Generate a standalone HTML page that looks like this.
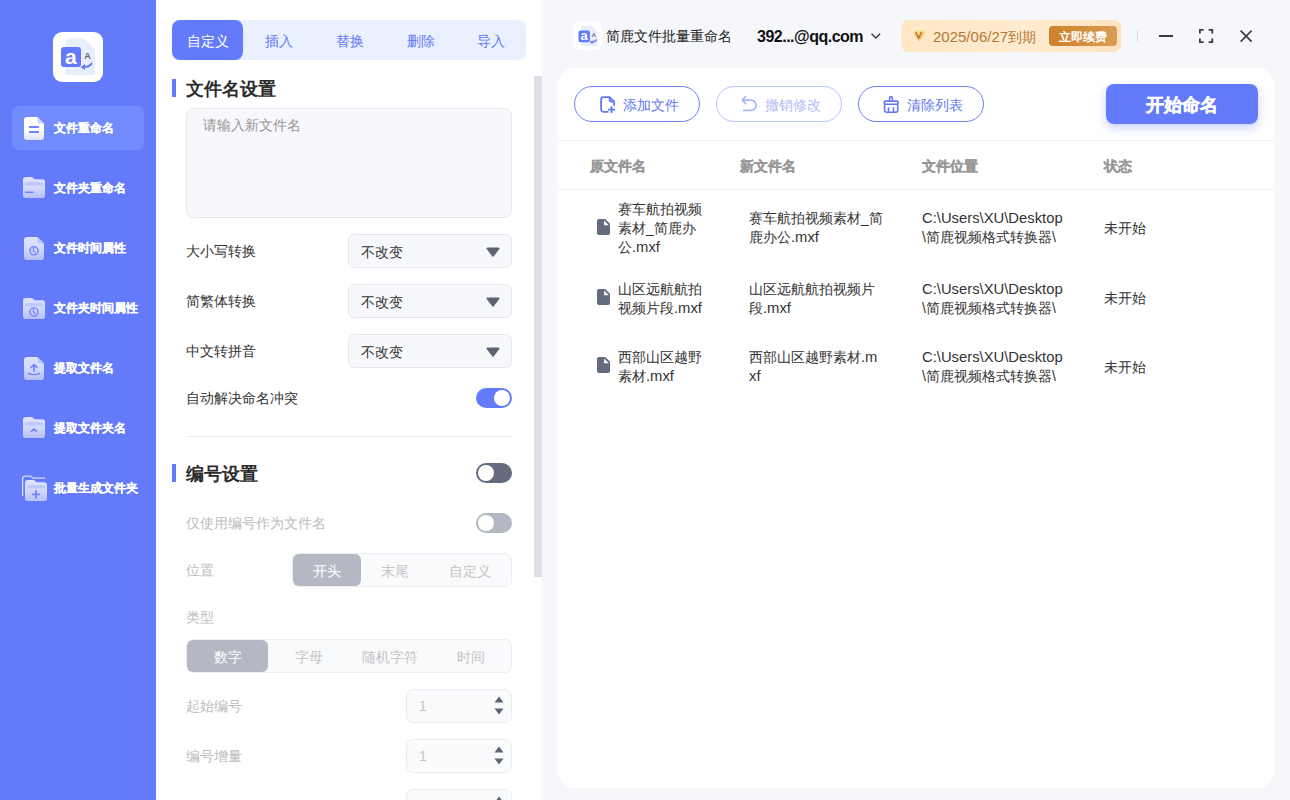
<!DOCTYPE html>
<html><head><meta charset="utf-8">
<style>
*{box-sizing:border-box;margin:0;padding:0}
html,body{width:1290px;height:800px;overflow:hidden;font-family:"Liberation Sans",sans-serif;background:#F5F6FA}
.a{position:absolute;white-space:nowrap}
#side{position:absolute;left:0;top:0;width:156px;height:800px;background:#637BFA}
.logo{position:absolute;left:53px;top:32px;width:50px;height:50px;background:#fff;border-radius:9px}
.nav{position:absolute;left:12px;width:132px;height:44px;border-radius:7px}
.nav.act{background:#718BFA}
.nav .t{position:absolute;left:42px;top:0;line-height:45px;font-size:12px;font-weight:bold;color:#fff;white-space:nowrap;-webkit-text-stroke:0.2px #fff}
.nav svg{position:absolute;left:11px;top:10px}
#mid{position:absolute;left:156px;top:0;width:386px;height:800px;background:#fff;overflow:hidden}
.tabs{position:absolute;left:16px;top:20px;width:354px;height:40px;background:#EBF0FE;border-radius:8px}
.tab{position:absolute;top:0;height:40px;line-height:43px;font-size:14px;color:#5F79F6;text-align:center;width:71px}
.tab.act{background:#637BFA;color:#fff;border-radius:8px}
.bar{position:absolute;left:16px;width:4px;height:17px;background:#637BFA}
.sec{position:absolute;left:30px;font-size:18px;font-weight:bold;color:#2B2B2B;line-height:20px;white-space:nowrap}
.lbl{position:absolute;left:30px;font-size:14px;color:#333;line-height:20px;white-space:nowrap}
.lbl.dis{color:#BDBDBD}
.sel{position:absolute;left:192px;width:164px;height:34px;background:#F7F8FC;border:1px solid #E6E8EE;border-radius:6px}
.sel .v{position:absolute;left:12px;top:1px;line-height:32px;font-size:14px;color:#333}
.sel svg{position:absolute;left:137px;top:12px}
.tog{position:absolute;left:320px;width:36px;height:20px;border-radius:10px}
.tog i{position:absolute;top:2px;width:16px;height:16px;border-radius:8px;background:#fff}
.seg{position:absolute;height:34px;background:#F9FAFC;border:1px solid #EBEDF2;border-radius:7px}
.seg .s{position:absolute;top:0;height:32px;line-height:34px;font-size:14px;color:#C4C4C4;text-align:center}
.seg .s.on{background:#B3B8C3;color:#fff;border-radius:6px}
.spin{position:absolute;left:250px;width:106px;height:34px;background:#F9FAFC;border:1px solid #EBEDF2;border-radius:7px}
.spin .v{position:absolute;left:12px;top:0;line-height:32px;font-size:14px;color:#C4C4C4}
.spin svg{position:absolute;left:86px;top:5px}
.sb{position:absolute;left:378px;top:76px;width:8px;height:501px;background:#DFDFE8}
#right{position:absolute;left:542px;top:0;width:748px;height:800px;background:#F6F7FB}
.card{position:absolute;left:16px;top:68px;width:716px;height:720px;background:#fff;border-radius:16px}
.btn{position:absolute;top:18px;width:126px;height:36px;border:1px solid #6B7FF6;border-radius:18px;background:#fff}
.btn .t{position:absolute;left:48px;top:1px;line-height:34px;font-size:14px;color:#6378F3}
.btn svg{position:absolute;left:24px;top:9px}
.btn.dis{border-color:#B9C4FA}
.btn.dis .t{color:#B3BDF7}
.go{position:absolute;left:548px;top:16px;width:152px;height:40px;background:#637BFA;border-radius:8px;box-shadow:0 4px 10px rgba(99,123,250,0.35);color:#fff;font-size:18px;font-weight:bold;text-align:center;line-height:43px;-webkit-text-stroke:0.4px #fff}
.hl{position:absolute;left:0;width:716px;height:1px;background:#EEEFF3}
.th{position:absolute;top:90px;font-size:14px;font-weight:bold;color:#999;line-height:16px;-webkit-text-stroke:0.3px #999}
.td{position:absolute;font-size:14px;color:#333;line-height:19px;white-space:nowrap}
.l{font-size:14.8px}
.fi{position:absolute;left:39px}
</style></head><body>
<div id="side">
  <div class="logo">
    <svg width="50" height="50" viewBox="0 0 50 50" style="position:absolute;left:0;top:0">
      <path d="M15.5 6.5h15.5l11 11v22.5a3 3 0 0 1-3 3h-23.5a3 3 0 0 1-3-3v-30.5a3 3 0 0 1 3-3z" fill="#E8EEFD"/>
      <rect x="8" y="15" width="20" height="20" rx="3" fill="#637BFA"/>
      <text x="17.8" y="31.5" font-family="Liberation Sans" font-size="21" font-weight="bold" fill="#fff" text-anchor="middle">a</text>
      <text x="34.5" y="27" font-family="Liberation Sans" font-size="9" font-weight="bold" fill="#5D6272" text-anchor="middle">A</text>
      <path d="M38.5 31.5q-2 3.5-7.5 3.5" stroke="#637BFA" stroke-width="2" fill="none" stroke-linecap="round"/>
      <path d="M27.5 35l4.5-3v6z" fill="#637BFA"/>
    </svg>
  </div>
  <div class="nav act" style="top:106px"><div class="t">文件重命名</div></div>
  <div class="nav" style="top:166px"><div class="t">文件夹重命名</div></div>
  <div class="nav" style="top:226px"><div class="t">文件时间属性</div></div>
  <div class="nav" style="top:286px"><div class="t">文件夹时间属性</div></div>
  <div class="nav" style="top:346px"><div class="t">提取文件名</div></div>
  <div class="nav" style="top:406px"><div class="t">提取文件夹名</div></div>
  <div class="nav" style="top:466px"><div class="t">批量生成文件夹</div></div>
  <svg width="156" height="800" viewBox="0 0 156 800" style="position:absolute;left:0;top:0">
    <defs>
      <linearGradient id="gw" x1="0" y1="0" x2="0" y2="1"><stop offset="0" stop-color="#fff"/><stop offset="0.55" stop-color="#fff"/><stop offset="1" stop-color="#DADFFC"/></linearGradient>
      <linearGradient id="gl" x1="0" y1="0" x2="0" y2="1"><stop offset="0" stop-color="#DDE2FD"/><stop offset="0.5" stop-color="#D3D9FC"/><stop offset="1" stop-color="#B6C0FA"/></linearGradient>
    </defs>
    <path transform="translate(24,117)" d="M3 0h10.5l6.5 6.5v13.5a3 3 0 0 1-3 3h-14a3 3 0 0 1-3-3v-17a3 3 0 0 1 3-3z" fill="url(#gw)"/><path transform="translate(24,117)" d="M13.5 0l6.5 6.5h-4.5a2 2 0 0 1-2-2z" fill="#C9D1FC"/><rect x="29" y="126" width="10" height="2" fill="#6F86F9"/><rect x="29" y="131" width="10" height="2" fill="#6F86F9"/><g transform="translate(23,177)"><path d="M0 2.8a2.8 2.8 0 0 1 2.8-2.8h5.7a2 2 0 0 1 1.5.7l1.3 1.6h7.9a2.8 2.8 0 0 1 2.8 2.8v13.1a2.8 2.8 0 0 1-2.8 2.8h-16.4a2.8 2.8 0 0 1-2.8-2.8z" fill="url(#gl)"/><path d="M2 7.5a2.5 2.5 0 0 1 2.5-2.5h13a2.5 2.5 0 0 1 2.5 2.5v1h-18z" fill="#BAC4FA" opacity="0.8"/></g><rect x="25" y="191.5" width="8.8" height="1.6" rx="0.8" fill="#6F86F9"/><path transform="translate(24,237)" d="M3 0h10.5l6.5 6.5v13.5a3 3 0 0 1-3 3h-14a3 3 0 0 1-3-3v-17a3 3 0 0 1 3-3z" fill="url(#gl)"/><path transform="translate(24,237)" d="M13.5 0l6.5 6.5h-4.5a2 2 0 0 1-2-2z" fill="#BEC8FB"/><circle cx="34" cy="250.8" r="4.1" fill="none" stroke="#6F86F9" stroke-width="1.4"/><path d="M33.4 248.3v2.4l1.8 1.7" fill="none" stroke="#6F86F9" stroke-width="1.3" stroke-linecap="round"/><g transform="translate(23,298)"><path d="M0 2.8a2.8 2.8 0 0 1 2.8-2.8h5.7a2 2 0 0 1 1.5.7l1.3 1.6h7.9a2.8 2.8 0 0 1 2.8 2.8v13.1a2.8 2.8 0 0 1-2.8 2.8h-16.4a2.8 2.8 0 0 1-2.8-2.8z" fill="url(#gl)"/><path d="M2 7.5a2.5 2.5 0 0 1 2.5-2.5h13a2.5 2.5 0 0 1 2.5 2.5v1h-18z" fill="#BAC4FA" opacity="0.8"/></g><circle cx="34" cy="312" r="4.1" fill="none" stroke="#6F86F9" stroke-width="1.4"/><path d="M33.4 309.5v2.4l1.8 1.7" fill="none" stroke="#6F86F9" stroke-width="1.3" stroke-linecap="round"/><path transform="translate(24,357)" d="M3 0h10.5l6.5 6.5v13.5a3 3 0 0 1-3 3h-14a3 3 0 0 1-3-3v-17a3 3 0 0 1 3-3z" fill="url(#gl)"/><path transform="translate(24,357)" d="M13.5 0l6.5 6.5h-4.5a2 2 0 0 1-2-2z" fill="#BEC8FB"/><path d="M34 371v-6.3M31 367.5l3-3 3 3" fill="none" stroke="#6F86F9" stroke-width="1.6" stroke-linecap="round" stroke-linejoin="round"/><path d="M28.3 373.3q5.7 2.6 11.4 0" fill="none" stroke="#6F86F9" stroke-width="1.4" stroke-linecap="round"/><g transform="translate(23,417)"><path d="M0 2.8a2.8 2.8 0 0 1 2.8-2.8h5.7a2 2 0 0 1 1.5.7l1.3 1.6h7.9a2.8 2.8 0 0 1 2.8 2.8v13.1a2.8 2.8 0 0 1-2.8 2.8h-16.4a2.8 2.8 0 0 1-2.8-2.8z" fill="url(#gl)"/><path d="M2 7.5a2.5 2.5 0 0 1 2.5-2.5h13a2.5 2.5 0 0 1 2.5 2.5v1h-18z" fill="#BAC4FA" opacity="0.8"/></g><path d="M31.3 431.5l2.7-2.6 2.7 2.6" fill="none" stroke="#6F86F9" stroke-width="1.6" stroke-linecap="round" stroke-linejoin="round"/><path d="M22.6 495.5v-16.5a2.8 2.8 0 0 1 2.8-2.8h5.5l1.8 2h11.8" fill="none" stroke="#D2D9FC" stroke-width="1.3" stroke-linecap="round"/><g transform="translate(25,480)"><path d="M0 2.8a2.8 2.8 0 0 1 2.8-2.8h5.7a2 2 0 0 1 1.5.7l1.3 1.6h7.9a2.8 2.8 0 0 1 2.8 2.8v13.1a2.8 2.8 0 0 1-2.8 2.8h-16.4a2.8 2.8 0 0 1-2.8-2.8z" fill="url(#gl)"/><path d="M2 7.5a2.5 2.5 0 0 1 2.5-2.5h13a2.5 2.5 0 0 1 2.5 2.5v1h-18z" fill="#BAC4FA" opacity="0.8"/></g><path d="M36 491v6.8M32.6 494.4h6.8" stroke="#6F86F9" stroke-width="1.8" stroke-linecap="round"/>
  </svg>
</div>
<div id="mid">
  <div class="tabs">
    <div class="tab act" style="left:0">自定义</div>
    <div class="tab" style="left:71px">插入</div>
    <div class="tab" style="left:142px">替换</div>
    <div class="tab" style="left:213px">删除</div>
    <div class="tab" style="left:283px">导入</div>
  </div>
  <div class="bar" style="top:79px;height:18px"></div>
  <div class="sec" style="top:79px">文件名设置</div>
  <div class="a" style="left:30px;top:108px;width:326px;height:110px;background:#F7F8FC;border:1px solid #E6E8EE;border-radius:8px"></div>
  <div class="a" style="left:47px;top:115px;font-size:14px;line-height:20px;color:#969696">请输入新文件名</div>

  <div class="lbl" style="top:241px">大小写转换</div>
  <div class="sel" style="top:234px"><div class="v">不改变</div><svg width="14" height="10" viewBox="0 0 14 10"><path d="M1.5 0.5h11a1 1 0 0 1 .8 1.6l-5.5 7.2a1 1 0 0 1-1.6 0l-5.5-7.2a1 1 0 0 1 .8-1.6z" fill="#5F6475"/></svg></div>
  <div class="lbl" style="top:291px">简繁体转换</div>
  <div class="sel" style="top:284px"><div class="v">不改变</div><svg width="14" height="10" viewBox="0 0 14 10"><path d="M1.5 0.5h11a1 1 0 0 1 .8 1.6l-5.5 7.2a1 1 0 0 1-1.6 0l-5.5-7.2a1 1 0 0 1 .8-1.6z" fill="#5F6475"/></svg></div>
  <div class="lbl" style="top:341px">中文转拼音</div>
  <div class="sel" style="top:334px"><div class="v">不改变</div><svg width="14" height="10" viewBox="0 0 14 10"><path d="M1.5 0.5h11a1 1 0 0 1 .8 1.6l-5.5 7.2a1 1 0 0 1-1.6 0l-5.5-7.2a1 1 0 0 1 .8-1.6z" fill="#5F6475"/></svg></div>
  <div class="lbl" style="top:388px">自动解决命名冲突</div>
  <div class="tog" style="top:388px;background:#637BFA"><i style="left:18px"></i></div>
  <div class="a" style="left:30px;top:436px;width:326px;height:1px;background:#EDEDEE"></div>

  <div class="bar" style="top:464px;height:18px"></div>
  <div class="sec" style="top:464px">编号设置</div>
  <div class="tog" style="top:463px;background:#656B7E"><i style="left:2px"></i></div>

  <div class="lbl dis" style="top:513px">仅使用编号作为文件名</div>
  <div class="tog" style="top:513px;background:#B3B8C3"><i style="left:2px"></i></div>
  <div class="lbl dis" style="top:560px">位置</div>
  <div class="seg" style="left:136px;top:553px;width:220px">
    <div class="s on" style="left:0;width:68px">开头</div>
    <div class="s" style="left:68px;width:68px">末尾</div>
    <div class="s" style="left:136px;width:82px">自定义</div>
  </div>
  <div class="lbl dis" style="top:607px">类型</div>
  <div class="seg" style="left:30px;top:639px;width:326px">
    <div class="s on" style="left:0;width:81px">数字</div>
    <div class="s" style="left:81px;width:81px">字母</div>
    <div class="s" style="left:162px;width:81px">随机字符</div>
    <div class="s" style="left:243px;width:81px">时间</div>
  </div>
  <div class="lbl dis" style="top:696px">起始编号</div>
  <div class="spin" style="top:689px"><div class="v">1</div><svg width="12" height="22" viewBox="0 0 12 22"><path d="M6 1.5l4.5 6h-9z" fill="#5F6475"/><path d="M6 19.5l4.5-6h-9z" fill="#5F6475"/></svg></div>
  <div class="lbl dis" style="top:746px">编号增量</div>
  <div class="spin" style="top:739px"><div class="v">1</div><svg width="12" height="22" viewBox="0 0 12 22"><path d="M6 1.5l4.5 6h-9z" fill="#5F6475"/><path d="M6 19.5l4.5-6h-9z" fill="#5F6475"/></svg></div>
  <div class="spin" style="top:789px"><svg width="12" height="22" viewBox="0 0 12 22"><path d="M6 1.5l4.5 6h-9z" fill="#5F6475"/></svg></div>
  <div class="sb"></div>
</div>

<div id="right">
  <div class="a" style="left:32px;top:22px;width:28px;height:28px;background:#fff;border-radius:6px">
    <svg width="28" height="28" viewBox="0 0 50 50" style="position:absolute;left:0;top:0">
      <path d="M15.5 6.5h15.5l11 11v22.5a3 3 0 0 1-3 3h-23.5a3 3 0 0 1-3-3v-30.5a3 3 0 0 1 3-3z" fill="#E8EEFD"/>
      <rect x="8" y="15" width="20.5" height="21" rx="3.5" fill="#637BFA"/>
      <text x="18" y="32.5" font-family="Liberation Sans" font-size="23" font-weight="bold" fill="#fff" text-anchor="middle">a</text>
      <text x="35.5" y="27" font-family="Liberation Sans" font-size="10" font-weight="bold" fill="#6A6F7E" text-anchor="middle">A</text>
      <path d="M40 32q-2.5 4-8.5 4" stroke="#637BFA" stroke-width="2.6" fill="none" stroke-linecap="round"/>
      <path d="M28 36l5-3.5v7z" fill="#637BFA"/>
    </svg>
  </div>
  <div class="a" style="left:64px;top:26px;font-size:14px;line-height:20px;color:#222">简鹿文件批量重命名</div>
  <div class="a" style="left:215px;top:27px;font-size:16px;letter-spacing:-0.5px;line-height:20px;color:#111;font-weight:bold">392...@qq.com</div>
  <div class="a" style="left:359px;top:20px;width:220px;height:32px;border-radius:8px;background:linear-gradient(90deg,#FFE7C6,#FFEBD0 55%,#FFE2BE)">
    <div class="a" style="left:32px;top:7px;font-size:15px;line-height:20px;color:#B27835">2025/06/27<span style="font-size:14px">到期</span></div>
    <div class="a" style="left:148px;top:6px;width:68px;height:20px;border-radius:4px;background:linear-gradient(90deg,#CD8129,#DA9C56);color:#fff;font-size:12px;font-weight:bold;line-height:22px;text-align:center">立即续费</div>
  </div>
  <div class="a" style="left:595px;top:30px;width:1px;height:12px;background:#D8D8DE"></div>

  <div class="card">
    <div class="btn" style="left:16px"><div class="t">添加文件</div></div>
    <div class="btn dis" style="left:158px"><div class="t">撤销修改</div></div>
    <div class="btn" style="left:300px"><div class="t">清除列表</div></div>
    <div class="go">开始命名</div>
    <div class="hl" style="top:72px"></div>
    <div class="th" style="left:32px">原文件名</div>
    <div class="th" style="left:182px">新文件名</div>
    <div class="th" style="left:364px">文件位置</div>
    <div class="th" style="left:546px">状态</div>
    <div class="hl" style="top:121px"></div>

    <div class="td" style="left:60px;top:132px">赛车航拍视频<br>素材_简鹿办<br>公<span class="l">.mxf</span></div>
    <div class="td" style="left:191px;top:141px">赛车航拍视频素材_简<br>鹿办公<span class="l">.mxf</span></div>
    <div class="td" style="left:364px;top:141px"><span class="l">C:\Users\XU\Desktop</span><br>\简鹿视频格式转换器\</div>
    <div class="td" style="left:546px;top:151px">未开始</div>

    <div class="td" style="left:60px;top:212px">山区远航航拍<br>视频片段<span class="l">.mxf</span></div>
    <div class="td" style="left:191px;top:212px">山区远航航拍视频片<br>段<span class="l">.mxf</span></div>
    <div class="td" style="left:364px;top:212px"><span class="l">C:\Users\XU\Desktop</span><br>\简鹿视频格式转换器\</div>
    <div class="td" style="left:546px;top:221px">未开始</div>

    <div class="td" style="left:60px;top:280px">西部山区越野<br>素材<span class="l">.mxf</span></div>
    <div class="td" style="left:191px;top:280px">西部山区越野素材<span class="l">.m</span><br><span class="l">xf</span></div>
    <div class="td" style="left:364px;top:280px"><span class="l">C:\Users\XU\Desktop</span><br>\简鹿视频格式转换器\</div>
    <div class="td" style="left:546px;top:290px">未开始</div>
  </div>
</div>
<svg width="1290" height="800" viewBox="0 0 1290 800" style="position:absolute;left:0;top:0;pointer-events:none">
  <defs>
    <linearGradient id="dg" x1="0.2" y1="0" x2="0.6" y2="1"><stop offset="0" stop-color="#FFF0C0"/><stop offset="0.45" stop-color="#F9D27F"/><stop offset="1" stop-color="#F0A039"/></linearGradient>
  </defs>
  <path d="M871.5 33.8l4.3 4.3 4.3-4.3" fill="none" stroke="#3A3A3A" stroke-width="1.4"/>
  <path d="M913.2 28.9h10.6l2.3 4.1-7.1 8.8-7.3-8.8z" fill="url(#dg)" stroke="#FFF6E6" stroke-width="0.9" stroke-linejoin="round"/>
  <path d="M915.7 32.4l2.9 5.4 2.9-5.4" fill="none" stroke="#B9772E" stroke-width="1.4" stroke-linecap="round" stroke-linejoin="round"/>
  <rect x="1159" y="35" width="14" height="2" fill="#3A3A3A"/>
  <path d="M1199.9 33.5v-3.7h3.7M1208.6 29.8h3.7v3.7M1212.3 38.4v3.7h-3.7M1203.6 42.1h-3.7v-3.7" fill="none" stroke="#3A3A3A" stroke-width="1.8"/>
  <path d="M1240.6 30.6l11 11M1251.6 30.6l-11 11" stroke="#3A3A3A" stroke-width="1.6"/>
  <g fill="none" stroke="#6378F3" stroke-width="1.8">
    <path d="M608.5 111.9H603.6a2.5 2.5 0 0 1-2.5-2.5V99.6a2.5 2.5 0 0 1 2.5-2.5H609.6L614.1 101.6V105.8"/>
    <path d="M609.6 97.1V99.6a2 2 0 0 0 2 2H614.1"/>
    <path d="M611.5 106.2V113.1M608.1 109.6H615"/>
  </g>
  <g fill="none" stroke="#A9B6FA" stroke-width="1.7" stroke-linecap="round" stroke-linejoin="round">
    <path d="M742.8 100.1H751a5.15 5.15 0 0 1 0 10.3H743.6"/>
    <path d="M745.6 96.5L742.3 100.1L745.6 103.6"/>
  </g>
  <g fill="none" stroke="#6378F3" stroke-width="1.6">
    <path d="M889.6 100.6V98a1.4 1.4 0 0 1 2.8 0V100.6"/>
    <rect x="884.2" y="101.1" width="13.9" height="3.1" rx="1.5"/>
    <path d="M884.6 104.2V110.6a1.6 1.6 0 0 0 1.6 1.6H896.1a1.6 1.6 0 0 0 1.6-1.6V104.2"/>
    <path d="M888.5 107.3V112M893.5 107.3V112"/>
  </g>
  <g transform="translate(597,219)"><path d="M2 0H8.2L13 4.8V14a2 2 0 0 1-2 2H2a2 2 0 0 1-2-2V2a2 2 0 0 1 2-2z" fill="#646B7D"/><path d="M7.1 1.5V6.2H11.8z" fill="#fff"/></g><g transform="translate(597,289)"><path d="M2 0H8.2L13 4.8V14a2 2 0 0 1-2 2H2a2 2 0 0 1-2-2V2a2 2 0 0 1 2-2z" fill="#646B7D"/><path d="M7.1 1.5V6.2H11.8z" fill="#fff"/></g><g transform="translate(597,357)"><path d="M2 0H8.2L13 4.8V14a2 2 0 0 1-2 2H2a2 2 0 0 1-2-2V2a2 2 0 0 1 2-2z" fill="#646B7D"/><path d="M7.1 1.5V6.2H11.8z" fill="#fff"/></g>
</svg>
</body></html>
